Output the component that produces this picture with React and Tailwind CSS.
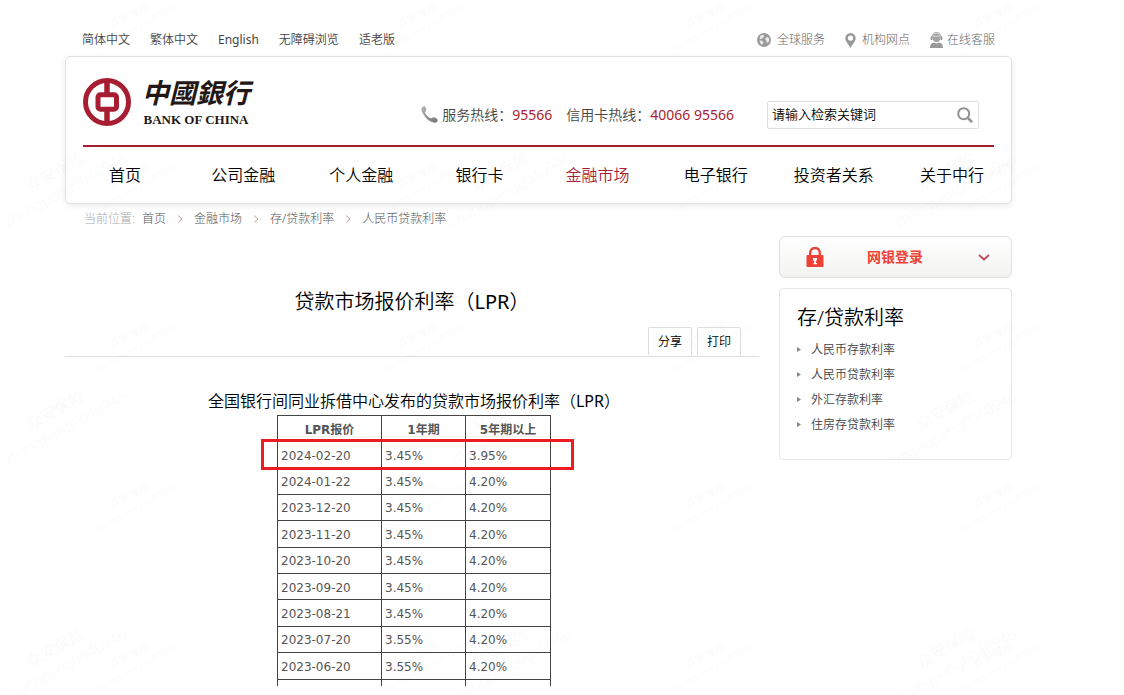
const topLinks = ["简体中文", "繁体中文", "English", "无障碍浏览", "适老版"];

const navItems = ["首页", "公司金融", "个人金融", "银行卡", "金融市场", "电子银行", "投资者关系", "关于中行"];

const crumbs = ["首页", "金融市场", "存/贷款利率", "人民币贷款利率"];

const sideLinks = ["人民币存款利率", "人民币贷款利率", "外汇存款利率", "住房存贷款利率"];

const rates = [
  ["2024-02-20", "3.45%", "3.95%"],
  ["2024-01-22", "3.45%", "4.20%"],
  ["2023-12-20", "3.45%", "4.20%"],
  ["2023-11-20", "3.45%", "4.20%"],
  ["2023-10-20", "3.45%", "4.20%"],
  ["2023-09-20", "3.45%", "4.20%"],
  ["2023-08-21", "3.45%", "4.20%"],
  ["2023-07-20", "3.55%", "4.20%"],
  ["2023-06-20", "3.55%", "4.20%"],
  ["\u00a0", "\u00a0", "\u00a0"],
];

function GlobeIcon() {
  return (
    <svg className="size-[14px] shrink-0" viewBox="0 0 14 14" aria-hidden="true">
      <circle cx="7" cy="7" r="7" fill="#9b9b9b" />
      <path d="M3 3.400 4.600 2 6.800 2.200 7.200 3.400 5.800 4.400 5.200 5.400 3.800 6 2.600 5.600Z" fill="#ededed" />
      <path d="M2.400 7.600 4.600 7.800 6.400 9 6 10.400 5 11.800 3.600 10.200Z" fill="#ededed" />
      <path d="M8.800 4.800 10.600 4 12.200 5.600 12 8 10.800 9.800 9.800 9.400 9.400 7.800 8.200 6.600Z" fill="#ededed" />
    </svg>
  );
}

function PinIcon() {
  return (
    <svg className="h-[15px] w-[11px] shrink-0" viewBox="0 0 11 15" aria-hidden="true">
      <path fillRule="evenodd" d="M5.500 0A5.200 5.200 0 0 0 .3 5.200C.3 8 3.400 11 5.500 15 7.600 11 10.700 8 10.700 5.200A5.200 5.200 0 0 0 5.500 0ZM5.500 2.500a2.600 2.600 0 1 1 0 5.200 2.600 2.600 0 0 1 0-5.200Z" fill="#999" />
    </svg>
  );
}

function AgentIcon() {
  return (
    <svg className="h-[16px] w-[13px] shrink-0" viewBox="0 0 13 16" aria-hidden="true">
      <ellipse cx="6.500" cy="5.800" rx="3.700" ry="4.300" fill="#a2a2a2" />
      <path d="M2 5.500C2 2.200 4 .6 6.500 .6S11 2.200 11 5.500" fill="none" stroke="#999" strokeWidth="1" />
      <path d="M3.200 4.200h6.600" stroke="#e4e4e4" strokeWidth=".8" />
      <rect x=".6" y="4.300" width="2" height="3.800" rx=".9" fill="#999" />
      <rect x="10.400" y="4.300" width="2" height="3.800" rx=".9" fill="#999" />
      <path d="M0 16c0-3.600 1.400-5 4.200-5.400L6.500 11.500l2.300-.9C11.600 11 13 12.400 13 16Z" fill="#999" />
    </svg>
  );
}

function PhoneIcon() {
  return (
    <svg className="size-[17px] shrink-0" viewBox="0 0 17 17" aria-hidden="true">
      <defs>
        <linearGradient id="phoneTone" x1="0" y1="0" x2="1" y2="1">
          <stop offset="0" stopColor="#b4b4b4" />
          <stop offset="1" stopColor="#757575" />
        </linearGradient>
      </defs>
      <path d="M1.400 .9C2.300 .2 3.600 0 4.200 .7 5 1.800 5.500 3.400 5.200 4.500 4.900 5.400 4 5.600 4 6.300 4.600 8.600 7.200 11.400 9.700 12.300 10.800 12.600 11.200 11.300 12.500 11.300 13.800 11.400 15.800 12.600 16.600 13.700 17 14.700 16 16 14.900 16.500 12.600 17.300 8.300 15.400 5 12 2 8.800 -.2 3.600 .4 2.200Z" fill="url(#phoneTone)" />
    </svg>
  );
}

function BankMark() {
  return (
    <svg className="size-[48px] shrink-0" viewBox="0 0 48 48" aria-hidden="true">
      <circle cx="24" cy="24" r="21.500" fill="none" stroke="#a71e32" strokeWidth="5" />
      <path d="M24 3v12M24 33v12" stroke="#a71e32" strokeWidth="5.500" />
      <rect x="15" y="16.800" width="18.500" height="14.400" rx="2.500" fill="none" stroke="#a71e32" strokeWidth="5" />
    </svg>
  );
}

function LockIcon() {
  return (
    <svg className="h-[20px] w-[18px] shrink-0" viewBox="0 0 18 20" aria-hidden="true">
      <path d="M4.200 9V5.800a4.800 4.800 0 0 1 9.600 0V9" fill="none" stroke="#ef4136" strokeWidth="2.400" />
      <rect x=".5" y="8" width="17" height="12" rx="1" fill="#ef4136" />
      <path d="M7 11h4v2.400h-1V16h.9v1.200H7.300V16h.9v-2.600H7Z" fill="#fff" />
    </svg>
  );
}

function Watermarks() {
  return (
    <svg className="pointer-events-none absolute inset-0 size-full" aria-hidden="true">
      <defs>
        <pattern id="markSmall" width="288" height="160" patternUnits="userSpaceOnUse" x="-10" y="100">
          <g transform="translate(144 84) rotate(-29)" fill="#000" fillOpacity=".02" textAnchor="middle" fontFamily="'Noto Sans','Noto Sans CJK SC',sans-serif">
            <text fontSize="11" y="-6">众安保险</text>
            <text fontSize="10" y="8">zhangpeng0040946</text>
          </g>
        </pattern>
        <pattern id="markLarge" width="445" height="238" patternUnits="userSpaceOnUse" x="-160" y="65">
          <g transform="translate(222 119) rotate(-29)" fill="#000" fillOpacity=".02" textAnchor="middle" fontFamily="'Noto Sans','Noto Sans CJK SC',sans-serif">
            <text fontSize="16" y="-8">众安保险</text>
            <text fontSize="15" y="12">zhangpeng0040946</text>
          </g>
        </pattern>
      </defs>
      <rect width="100%" height="100%" fill="url(#markSmall)" />
      <rect width="100%" height="100%" fill="url(#markLarge)" />
    </svg>
  );
}

export default function App() {
  return (
    <div className="relative min-h-screen bg-white pr-[112px] pl-[65px] font-['Noto_Sans','Noto_Sans_CJK_SC',sans-serif] font-[350] text-black">
      <div className="flex items-center justify-between pt-[30px] pr-[17px] pb-[6px] pl-[17px] text-xs leading-5">
        <nav aria-label="语言" className="flex gap-5 text-[#444]">
          {topLinks.map((t) => (
            <a key={t} href="#" className={t === "English" ? "font-normal" : undefined}>{t}</a>
          ))}
        </nav>
        <nav aria-label="服务" className="flex gap-5 font-light text-[#666]">
          <a href="#" className="flex items-center gap-[6px]"><GlobeIcon />全球服务</a>
          <a href="#" className="flex items-center gap-[6px]"><PinIcon />机构网点</a>
          <a href="#" className="flex items-center gap-1"><AgentIcon />在线客服</a>
        </nav>
      </div>

      <header className="rounded-[5px] border border-[#e2e2e2] px-[17px] shadow-[0_2px_6px_rgba(0,0,0,0.08)]">
        <div className="flex h-[90px] items-center border-b-2 border-[#a71e32] pt-[2px]">
          <a href="#" className="flex items-center gap-[11px] text-[#231815]">
            <BankMark />
            <span className="flex flex-col items-center pb-[6px]">
              <span lang="zh-Hant" className="font-['Noto_Sans_CJK_TC',sans-serif] text-[27px] leading-[40px] font-bold italic">中國銀行</span>
              <span className="font-['Liberation_Serif',serif] text-[13px] leading-[15px] font-bold">BANK OF CHINA</span>
            </span>
          </a>
          <div className="ml-auto flex items-center pt-[25px]">
            <p className="flex items-center gap-1 text-sm text-[#444]">
              <PhoneIcon />
              <span>服务热线：<b className="font-normal text-[#a71e32]">95566</b></span>
            </p>
            <p className="ml-[14px] text-sm text-[#444]">信用卡热线：<b className="font-normal text-[#a71e32]">40066 95566</b></p>
            <form className="mr-[15px] ml-[33px] flex h-[28px] w-[212px] items-center rounded-xs border border-[#ddd] pr-[5px] pl-1">
              <input aria-label="检索" defaultValue="请输入检索关键词" className="min-w-0 flex-1 bg-transparent text-[13px] outline-none" />
              <button type="button" aria-label="搜索">
                <svg className="size-[16px]" viewBox="0 0 16 16" fill="none" stroke="#909090" aria-hidden="true">
                  <circle cx="6.700" cy="6.700" r="5.500" strokeWidth="2" />
                  <path d="m10.800 10.800 4.300 4.300" strokeWidth="2.600" />
                </svg>
              </button>
            </form>
          </div>
        </div>
        <nav aria-label="主导航" className="-mx-[17px] grid grid-cols-8 py-4 text-base leading-6">
          {navItems.map((t) => (
            <a key={t} href="#" className={t === "金融市场" ? "text-center text-[#a71e32]" : "text-center"}>{t}</a>
          ))}
        </nav>
      </header>

      <nav aria-label="当前位置" className="flex items-center pt-[5px] pl-[19px] text-xs leading-5 font-light text-[#555]">
        <span className="text-[#aaa]">当前位置:</span>
        {crumbs.map((t, i) => (
          <span key={t} className="flex items-center">
            {i > 0 && (
              <svg className="ml-[11px] h-2 w-[6px]" viewBox="0 0 6 8" fill="none" stroke="#c9a0a0" aria-hidden="true">
                <path d="m1 .5 4 3.500-4 3.500" />
              </svg>
            )}
            <a href="#" className={i > 0 ? "ml-[11px]" : "ml-[7px]"}>{t}</a>
          </span>
        ))}
      </nav>

      <div className="mt-[7px] flex items-start gap-5">
        <main className="min-w-0 flex-1">
          <h1 className="mt-[52px] text-center text-xl leading-7">贷款市场报价利率（<span className="font-normal">LPR</span>）</h1>
          <div className="mt-[11px] flex justify-end gap-[5px] border-b border-[#ddd] pr-[18px] pb-px text-xs">
            <button type="button" className="h-[28px] w-[44px] rounded-t-xs border border-b-0 border-[#ddd]">分享</button>
            <button type="button" className="h-[28px] w-[44px] rounded-t-xs border border-b-0 border-[#ddd]">打印</button>
          </div>
          <div className="pl-1">
            <h2 className="mt-8 text-center text-base leading-6">全国银行间同业拆借中心发布的贷款市场报价利率（<span className="font-normal">LPR</span>）</h2>
            <div className="relative mx-auto mt-[2px] w-[274px]">
              <div className="h-[271px] overflow-hidden">
                <table className="h-[291px] w-full table-fixed border-collapse font-['DejaVu_Sans','Noto_Sans_CJK_SC',sans-serif] text-xs leading-4 font-normal text-[#555]">
                  <thead>
                    <tr className="h-[26px]">
                      <th className="w-[104px] border border-[#444] pt-[2px] font-bold">LPR报价</th>
                      <th className="w-[84px] border border-[#444] pt-[2px] font-bold">1年期</th>
                      <th className="border border-[#444] pt-[2px] font-bold">5年期以上</th>
                    </tr>
                  </thead>
                  <tbody>
                    {rates.map((row, i) => (
                      <tr key={i}>
                        {row.map((v, j) => (
                          <td key={j} className="border border-[#444] px-[3px] pt-[2px]">{v}</td>
                        ))}
                      </tr>
                    ))}
                  </tbody>
                </table>
              </div>
              <div className="absolute top-[24px] -right-[23px] -left-[16px] h-[31px] border-3 border-[#ed1c24]" />
            </div>
          </div>
        </main>

        <aside className="w-[233px] shrink-0">
          <button type="button" className="flex h-[42px] w-full items-center rounded-md border border-[#e0e0e0] bg-linear-to-b from-white to-[#f3f3f1] pr-[21px] pl-[26px] text-sm font-bold text-[#ef4136]">
            <LockIcon />
            <span className="flex-1 pr-3 text-center">网银登录</span>
            <svg className="h-[7px] w-[12px]" viewBox="0 0 12 7" fill="none" stroke="#bb4a5c" strokeWidth="1.800" aria-hidden="true">
              <path d="m1 1 5 4.500L11 1" />
            </svg>
          </button>
          <section className="mt-[10px] rounded-sm border border-[#e6e6e6] px-[17px] pt-[15px] pb-[22px]">
            <h2 className="text-xl leading-7">存/贷款利率</h2>
            <ul className="mt-[5px] text-xs leading-[25px] text-[#444]">
              {sideLinks.map((t) => (
                <li key={t}>
                  <a href="#" className="flex items-center gap-[10px]">
                    <svg className="h-[5px] w-[4px]" viewBox="0 0 4 5" aria-hidden="true">
                      <path d="M0 0 4 2.500 0 5Z" fill="#888" />
                    </svg>
                    {t}
                  </a>
                </li>
              ))}
            </ul>
          </section>
        </aside>
      </div>
      <Watermarks />
    </div>
  );
}
